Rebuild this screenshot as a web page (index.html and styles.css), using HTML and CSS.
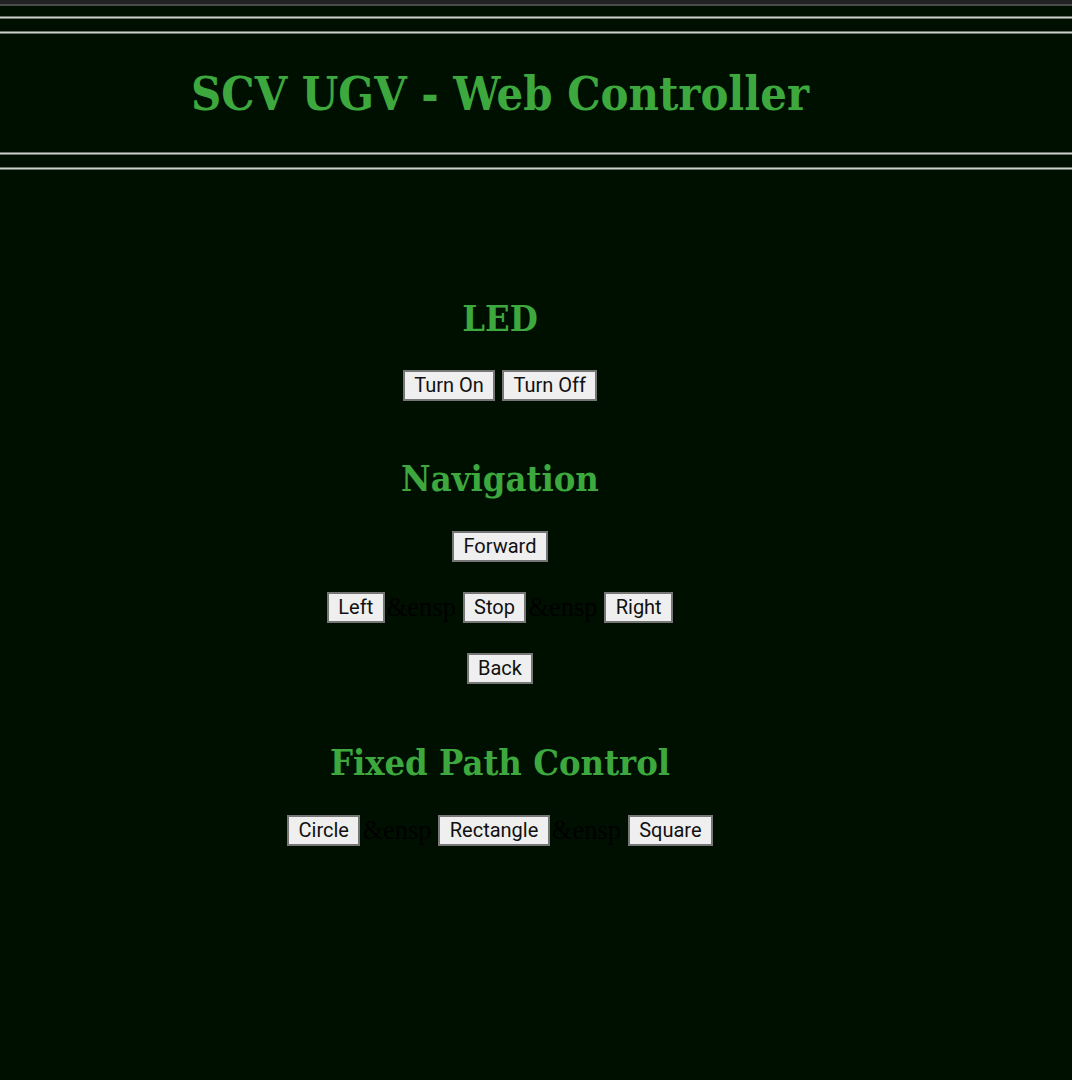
FILE: index.html
```html
<!DOCTYPE html>
<html>
<head>
<meta charset="utf-8">
<title>SCV UGV - Web Controller</title>
<link rel="stylesheet" href="styles.css">
</head>
<body>
<div class="topbar"></div>
<header class="header">
  <div class="rule rule-a"></div>
  <div class="rule rule-b"></div>
  <h1 class="title">SCV UGV - Web Controller</h1>
  <div class="rule rule-c"></div>
  <div class="rule rule-d"></div>
</header>
<main class="content">
  <section class="group group-led">
    <h2 class="heading">LED</h2>
    <div class="row"><button class="btn">Turn On</button> <button class="btn">Turn Off</button></div>
  </section>
  <section class="group group-nav">
    <h2 class="heading">Navigation</h2>
    <div class="row"><button class="btn">Forward</button></div>
    <div class="row"><button class="btn">Left</button><span class="ent">&amp;ensp</span> <button class="btn">Stop</button><span class="ent">&amp;ensp</span> <button class="btn">Right</button></div>
    <div class="row"><button class="btn">Back</button></div>
  </section>
  <section class="group group-path">
    <h2 class="heading">Fixed Path Control</h2>
    <div class="row"><button class="btn">Circle</button><span class="ent">&amp;ensp</span> <button class="btn">Rectangle</button><span class="ent">&amp;ensp</span> <button class="btn">Square</button></div>
  </section>
</main>
</body>
</html>
```
FILE: styles.css
```css
html, body {
  margin: 0;
  padding: 0;
  background: #001000;
  width: 1072px;
  height: 1080px;
  overflow: hidden;
}
.topbar {
  height: 4px;
  background: #222222;
  border-bottom: 2px solid #4a4a4a;
}
.header {
  display: flex;
  flex-direction: column;
}
.rule {
  height: 1px;
  background: #c8d0c8;
  border-top: 1px solid #6c746c;
  border-bottom: 1px solid #6c746c;
}
.rule-a { margin-top: 10px; }
.rule-b { margin-top: 12px; }
.rule-c { margin-top: 0; }
.rule-d { margin-top: 12px; }
.title {
  margin: 0;
  height: 118px;
  width: 1000px;
  display: flex;
  align-items: center;
  justify-content: center;
  font-family: "DejaVu Serif", serif;
  font-stretch: condensed;
  font-weight: bold;
  font-size: 46.6px;
  color: #3da83d;
}
.content {
  width: 1000px;
  display: flex;
  flex-direction: column;
  align-items: center;
  padding-top: 126px;
}
.group {
  display: flex;
  flex-direction: column;
  align-items: center;
}
.heading {
  margin: 0;
  font-family: "DejaVu Serif", serif;
  font-stretch: condensed;
  font-weight: bold;
  font-size: 36px;
  color: #3da83d;
  line-height: 44px;
}
.row {
  display: block;
  text-align: center;
  white-space: nowrap;
  font-family: "Liberation Serif", serif;
  font-size: 26.5px;
  color: #000000;
  height: 31px;
  line-height: 31px;
  margin-top: 30px;
}
.btn {
  display: inline-block;
  vertical-align: top;
  font-family: Roboto, sans-serif;
  font-size: 20px;
  line-height: 27px;
  color: #111111;
  background: #efefef;
  border: 2px solid #767676;
  border-radius: 0;
  height: 31px;
  padding: 0 9.5px;
  margin: 0;
}
.ent {
  margin-left: 2px;
}
.group-nav { margin-top: 55px; }
.group-nav .row { margin-top: 31px; }
.group-nav .row + .row { margin-top: 30px; }
.group-path { margin-top: 56px; }
.group-path .row { margin-top: 31px; }
```
